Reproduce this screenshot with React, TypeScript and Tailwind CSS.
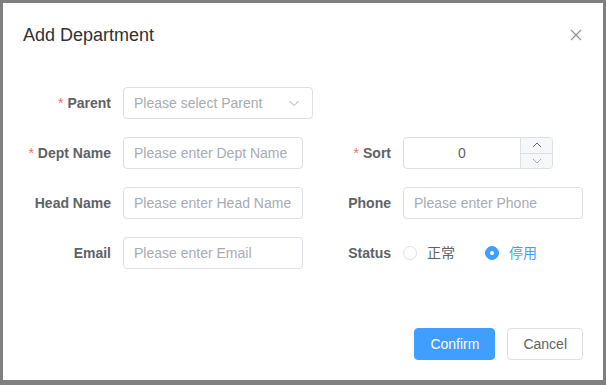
import React from "react";

const font = { fontFamily: '"Liberation Sans", Arial, "Noto Sans CJK SC", sans-serif' };

const Label = ({ text, required }: { text: string; required?: boolean }) => (
  <label className="w-[100px] shrink-0 pr-[12px] text-right text-[14px] leading-[32px] font-bold text-[#606266]">
    {required && <span className="mr-[4px] font-normal text-[#f56c6c]">*</span>}
    {text}
  </label>
);

const TextInput = ({ placeholder, width = "w-[180px]" }: { placeholder: string; width?: string }) => (
  <div className={`${width} h-[32px] rounded-[4px] border border-[#dcdfe6] bg-white px-[10px] flex items-center`}>
    <span className="text-[14px] text-[#a8abb2] whitespace-nowrap overflow-hidden">{placeholder}</span>
  </div>
);

const Radio = ({ label, checked }: { label: string; checked?: boolean }) => (
  <div className="flex items-center mr-[30px]">
    {checked ? (
      <span className="w-[14px] h-[14px] rounded-full bg-[#409eff] border border-[#409eff] flex items-center justify-center">
        <span className="w-[4px] h-[4px] rounded-full bg-white" />
      </span>
    ) : (
      <span className="w-[14px] h-[14px] rounded-full border border-[#dcdfe6] bg-white" />
    )}
    <span className={`ml-[10px] text-[14px] ${checked ? "text-[#409eff]" : "text-[#606266]"}`}>{label}</span>
  </div>
);

const App = () => {
  return (
    <div className="h-[385px] w-[606px] bg-[#808080] p-[3px]" style={font}>
      <div className="w-[600px] h-[377px] bg-white flex flex-col">
        <div className="flex items-center justify-between px-[20px] pt-[20px] pb-[10px]">
          <span className="text-[18px] leading-[24px] text-[#303133]">Add Department</span>
          <svg width="12" height="12" viewBox="0 0 12 12" className="mr-[1px]">
            <path d="M1 1L11 11M11 1L1 11" stroke="#909399" strokeWidth="1.2" fill="none" />
          </svg>
        </div>

        <div className="px-[20px] py-[30px] flex flex-col gap-[18px]">
          <div className="flex">
            <Label text="Parent" required />
            <div className="w-[190px] h-[32px] rounded-[4px] border border-[#dcdfe6] px-[10px] flex items-center justify-between">
              <span className="text-[14px] text-[#a8abb2]">Please select Parent</span>
              <svg width="12" height="12" viewBox="0 0 12 12" className="mr-[2px]">
                <path d="M1.5 4L6 8.5L10.5 4" stroke="#a8abb2" strokeWidth="1" fill="none" />
              </svg>
            </div>
          </div>

          <div className="grid grid-cols-2">
            <div className="flex">
              <Label text="Dept Name" required />
              <TextInput placeholder="Please enter Dept Name" />
            </div>
            <div className="flex">
              <Label text="Sort" required />
              <div className="w-[150px] h-[32px] rounded-[4px] border border-[#dcdfe6] flex overflow-hidden">
                <div className="flex-1 pl-[15px] pr-[15px] flex items-center justify-center text-[14px] text-[#606266]">0</div>
                <div className="w-[32px] border-l border-[#dcdfe6] bg-[#f5f7fa] flex flex-col">
                  <div className="flex-1 flex items-center justify-center border-b border-[#dcdfe6]">
                    <svg width="10" height="6" viewBox="0 0 10 6">
                      <path d="M1 5L5 1L9 5" stroke="#606266" strokeWidth="1" fill="none" />
                    </svg>
                  </div>
                  <div className="flex-1 flex items-center justify-center">
                    <svg width="10" height="6" viewBox="0 0 10 6">
                      <path d="M1 1L5 5L9 1" stroke="#a8abb2" strokeWidth="1" fill="none" />
                    </svg>
                  </div>
                </div>
              </div>
            </div>
          </div>

          <div className="grid grid-cols-2">
            <div className="flex">
              <Label text="Head Name" />
              <TextInput placeholder="Please enter Head Name" />
            </div>
            <div className="flex">
              <Label text="Phone" />
              <TextInput placeholder="Please enter Phone" />
            </div>
          </div>

          <div className="grid grid-cols-2">
            <div className="flex">
              <Label text="Email" />
              <TextInput placeholder="Please enter Email" />
            </div>
            <div className="flex">
              <Label text="Status" />
              <div className="flex items-center h-[32px]">
                <Radio label="正常" />
                <Radio label="停用" checked />
              </div>
            </div>
          </div>
        </div>

        <div className="flex justify-end gap-[12px] px-[20px] pt-[10px] pb-[20px] mt-auto">
          <button className="h-[32px] px-[15px] rounded-[4px] bg-[#409eff] border border-[#409eff] text-[14px] text-white">Confirm</button>
          <button className="h-[32px] px-[15px] rounded-[4px] bg-white border border-[#dcdfe6] text-[14px] text-[#606266]">Cancel</button>
        </div>
      </div>
    </div>
  );
};

export default App;
